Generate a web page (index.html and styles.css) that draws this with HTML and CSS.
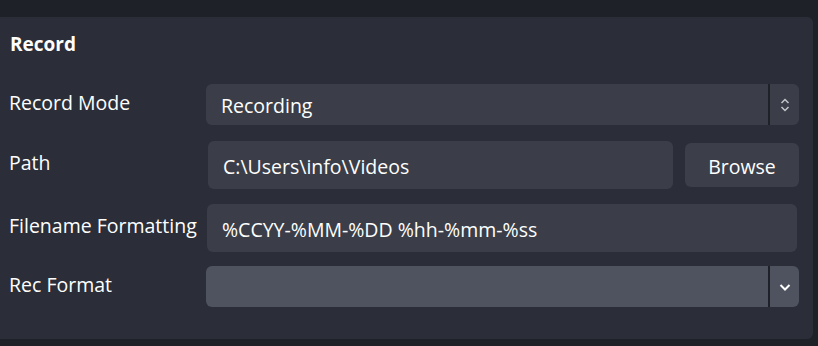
FILE: index.html
```html
<!DOCTYPE html>
<html lang="en">
<head>
  <meta charset="UTF-8">
  <title>Record Settings</title>
  <link rel="stylesheet" href="styles.css">
</head>
<body>
  <div class="panel">
    <h2 class="panel-title">Record</h2>

    <div class="form">
      <label class="label">Record Mode</label>
      <div class="combo">
        <span class="combo-value">Recording</span>
        <span class="combo-arrow">
          <svg width="12" height="16" viewBox="0 0 12 16">
            <path d="M2.5 6 L6 2.5 L9.5 6" fill="none" stroke="#c3c5cb" stroke-width="1.5"/>
            <path d="M2.5 10 L6 13.5 L9.5 10" fill="none" stroke="#c3c5cb" stroke-width="1.5"/>
          </svg>
        </span>
      </div>

      <label class="label">Path</label>
      <div class="path-row">
        <div class="field">C:\Users\info\Videos</div>
        <button class="btn">Browse</button>
      </div>

      <label class="label">Filename Formatting</label>
      <div class="field">%CCYY-%MM-%DD %hh-%mm-%ss</div>

      <label class="label">Rec Format</label>
      <div class="combo combo-active">
        <span class="combo-value"></span>
        <span class="combo-arrow">
          <svg width="14" height="10" viewBox="0 0 14 10">
            <path d="M2.5 3 L7 7.5 L11.5 3" fill="none" stroke="#ffffff" stroke-width="2"/>
          </svg>
        </span>
      </div>
    </div>
  </div>
</body>
</html>
```

FILE: styles.css
```css
* {
  margin: 0;
  padding: 0;
  box-sizing: border-box;
}

body {
  font-family: 'Open Sans', sans-serif;
  background-color: #1f2129;
  color: #fefefe;
  height: 346px;
  overflow: hidden;
}

.panel {
  margin-top: 17px;
  width: 813px;
  height: 322px;
  background-color: #2b2e38;
  border-radius: 0 6px 6px 0;
  padding: 15px 14px 0 9px;
}

.panel-title {
  font-size: 19px;
  font-weight: 700;
  line-height: 24px;
  padding-left: 1px;
  margin-bottom: 28px;
}

.form {
  display: grid;
  grid-template-columns: 197px 1fr;
  grid-template-rows: 41px 48px 48px 41px;
  row-gap: 15px;
  align-items: center;
}

.form > .path-row {
  margin-top: 2px;
}

.form > .field {
  margin-top: 1px;
}

.label {
  font-size: 19.5px;
  line-height: 24px;
  padding-bottom: 3px;
  align-self: center;
}

.combo {
  height: 41px;
  display: flex;
  background-color: #3b3e48;
  border-radius: 6px;
  overflow: hidden;
}

.combo-active {
  background-color: #4f5360;
}

.combo-value {
  flex: 1;
  font-size: 19.5px;
  line-height: 41px;
  padding-top: 1px;
  padding-left: 15px;
  border-right: 2px solid #1f2129;
}

.combo-arrow {
  width: 29px;
  display: flex;
  align-items: center;
  justify-content: center;
}

.path-row {
  display: flex;
  gap: 12px;
  height: 48px;
  padding-left: 2px;
  align-items: center;
}

.field {
  flex: 1;
  height: 48px;
  background-color: #3b3e48;
  border-radius: 6px;
  font-size: 19.5px;
  line-height: 44px;
  padding-top: 4px;
  padding-left: 15px;
  margin-right: 2px;
}

.path-row .field {
  margin-right: 0;
}

.form > .field {
  margin-left: 1px;
}

.btn {
  width: 114px;
  height: 44px;
  background-color: #3c3f4a;
  color: #fefefe;
  border: none;
  border-radius: 6px;
  font-family: 'Open Sans', sans-serif;
  font-size: 19.5px;
  padding-top: 2px;
}
```
